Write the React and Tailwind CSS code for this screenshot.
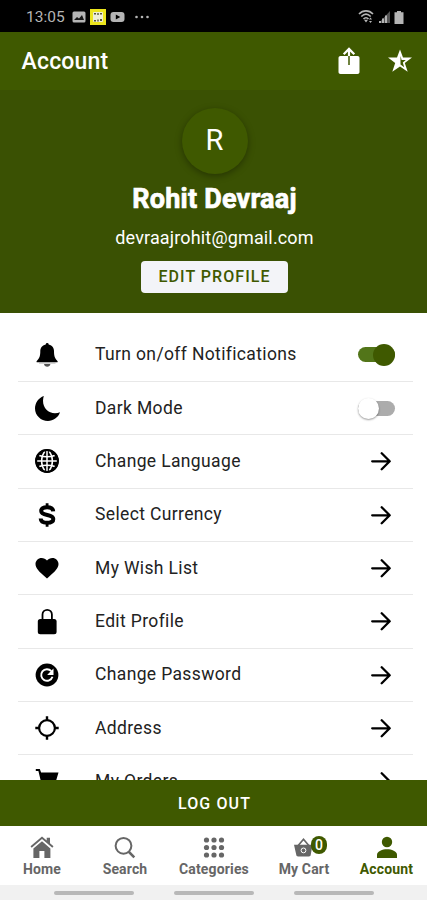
import React from "react";

function Svg({ w = 24, h = 24, box, className = "", children }) {
  return (
    <svg width={w} height={h} viewBox={box || `0 0 ${w} ${h}`} className={`block shrink-0 ${className}`} fill="currentColor">
      {children}
    </svg>
  );
}

const Bell = () => (
  <Svg>
    <path d="M12.200 0a1.500 1.500 0 0 1 1.500 1.400c3.800.9 5.300 3.500 5.300 6.700 0 5 .7 7.200 3.200 9.600.9.9.5 1.600-.3 1.600H2.300c-.8 0-1.200-.7-.3-1.600 2.600-2.400 3.300-4.600 3.300-9.600 0-3.200 1.600-5.800 5.400-6.700A1.500 1.500 0 0 1 12.200 0Z" />
    <path d="M9 21h6.400c-.3 1.700-1.500 2.800-3.200 2.800S9.300 22.700 9 21Z" fill="#555" />
    <path d="M4 19.300h16.500v1.200H4z" fill="#aaa" />
  </Svg>
);

const Moon = () => (
  <Svg w={25} h={25} box="0 0 24 24">
    <path d="M8.500 0A12.600 12.600 0 0 0 7.700 4.600c0 7 5.100 12 11.500 12 1.700 0 3.400-.3 4.800-.9C22.200 20.900 17.600 24 12.400 24 5.700 24 0 18.700 0 12 0 6.500 3.400 1.700 8.500 0Z" />
  </Svg>
);

const Globe = () => (
  <Svg>
    <circle cx="12" cy="12" r="11.700" />
    <g fill="none" stroke="#fff" strokeWidth="1.500">
      <path d="M2 12h20M12 2v20" />
      <path d="M4.300 6.500c4.300 1.800 11.100 1.800 15.400 0M4.300 17.500c4.300-1.800 11.100-1.800 15.400 0" />
      <path d="M9.800 2.400C5.500 8 5.500 16 9.800 21.600M14.200 2.400c4.300 5.600 4.300 13.600 0 19.200" />
    </g>
    <circle cx="12" cy="12" r="10.900" fill="none" stroke="currentColor" strokeWidth="2" />
  </Svg>
);

const Dollar = () => (
  <Svg>
    <path fill="none" stroke="currentColor" strokeWidth="4" d="M18.200 8.300C18 5.500 15.700 4.200 12.100 4.200 8.500 4.200 6.200 5.600 6.200 8c0 5.400 12.100 2.700 12.100 8 0 2.500-2.500 3.800-6.200 3.800-3.800 0-6.300-1.400-6.400-4.300" />
    <path d="M10.700.2h2.800v4h-2.800zM10.700 19.800h2.800v4h-2.800z" />
  </Svg>
);

const Heart = () => (
  <Svg>
    <path d="M12 22.500 10.300 21C4.200 15.600.5 12.300.5 8 .5 4.500 3.200 1.900 6.600 1.900c2.100 0 4.100 1 5.400 2.600 1.300-1.600 3.300-2.600 5.400-2.600 3.400 0 6.100 2.600 6.100 6.100 0 4.300-3.700 7.600-9.800 13Z" />
  </Svg>
);

const Lock = () => (
  <Svg w={24} h={27}>
    <rect x="2.800" y="11" width="18.800" height="15.200" rx="2.500" />
    <path fill="none" stroke="currentColor" strokeWidth="1.800" d="M7.500 12V6.500a4.700 4.700 0 0 1 9.400 0V12" />
  </Svg>
);

const Password = () => (
  <Svg>
    <circle cx="12" cy="12" r="11.400" />
    <path fill="none" stroke="#fff" strokeWidth="1.900" d="M16.300 8.100A5.800 5.800 0 1 0 17.500 13.800" />
    <path fill="#fff" d="M18.500 5.500v6.400h-6.400z" />
  </Svg>
);

const Locate = () => (
  <Svg>
    <circle cx="12" cy="12" r="7.900" fill="none" stroke="currentColor" strokeWidth="2.200" />
    <path d="M10.800.3h2.400v4h-2.400zM10.800 19.700h2.400v4h-2.400zM.3 10.800h4v2.400h-4zM19.700 10.800h4v2.400h-4z" />
  </Svg>
);

const Cart = () => (
  <Svg>
    <path d="M.8 0h4l1.300 3.500h17.400l-2.800 9.500H8.200L7 16h13v2H5.500c-1 0-1.600-1-1.100-1.900L6 12.800 3.400 2H.8z" />
    <circle cx="8" cy="21" r="2" />
    <circle cx="18" cy="21" r="2" />
  </Svg>
);

const Arrow = () => (
  <Svg w={20} h={20} className="mr-[22px]">
    <path fill="none" stroke="currentColor" strokeWidth="2.300" strokeLinecap="round" strokeLinejoin="round" d="M1.200 10.300h17M10.700 2.300l8 8-8 8" />
  </Svg>
);

const Toggle = ({ on }) =>
  on ? (
    <div className="mr-[18px] flex h-[15px] w-[37px] items-center justify-end rounded-full bg-[#527519]">
      <div className="h-[22px] w-[22px] shrink-0 rounded-full bg-[#3f5900]" />
    </div>
  ) : (
    <div className="mr-[18px] flex h-[15px] w-[37px] items-center rounded-full bg-[#acacac]">
      <div className="h-[21px] w-[21px] shrink-0 rounded-full bg-white shadow-[0_1px_2px_rgba(0,0,0,0.4)]" />
    </div>
  );

const rows = [
  ["Turn on/off Notifications", Bell, <Toggle on />],
  ["Dark Mode", Moon, <Toggle />],
  ["Change Language", Globe, <Arrow />],
  ["Select Currency", Dollar, <Arrow />],
  ["My Wish List", Heart, <Arrow />],
  ["Edit Profile", Lock, <Arrow />],
  ["Change Password", Password, <Arrow />],
  ["Address", Locate, <Arrow />],
  ["My Orders", Cart, <Arrow />],
];

const HomeIcon = () => (
  <Svg w={24} h={23}>
    <path d="M12 5.200 3.400 12.500V22h6v-7h5v7h6v-9.500Z" />
    <path d="m12 .6 4.700 4V1.800H20v5.500l3.500 3-1.200 1.400L12 3 1.700 11.700.5 10.300Z" />
  </Svg>
);
const SearchIcon = () => (
  <Svg w={24} h={23}>
    <circle cx="10.500" cy="9.800" r="7.900" fill="none" stroke="currentColor" strokeWidth="2" />
    <path d="m15.500 15.500 5.800 5.800" stroke="currentColor" strokeWidth="2.500" />
  </Svg>
);
const GridIcon = () => (
  <Svg w={24} h={23}>
    {[4.500, 12, 19.500].map((x) => [4, 11.500, 19].map((y) => <circle key={`${x}-${y}`} cx={x} cy={y} r="2.600" />))}
  </Svg>
);
const BasketIcon = () => (
  <div className="relative">
    <Svg w={24} h={23}>
      <path d="M2 8.700h18.500l-1.800 10.400c-.2 1-.8 1.400-1.700 1.400H6c-.9 0-1.500-.4-1.700-1.400Z" />
      <path fill="none" stroke="currentColor" strokeWidth="1.700" d="m6.200 9.500 5.300-6.300 5.300 6.300" />
      <circle cx="11.500" cy="14.400" r="2.400" fill="none" stroke="#fff" strokeWidth="1" />
    </Svg>
    <span className="absolute top-0 left-[19px] flex h-[18px] w-[16px] items-center justify-center rounded-full bg-[#3f5900] text-[14px] leading-none font-medium text-white">0</span>
  </div>
);
const PersonIcon = () => (
  <Svg w={24} h={23}>
    <ellipse cx="12" cy="6" rx="5.200" ry="5.300" />
    <path d="M2 22v-3.200c0-3.600 5.500-5.600 10-5.600s10 2 10 5.600V22Z" />
  </Svg>
);

const tabs = [
  ["Home", HomeIcon, "w-[84px]", ""],
  ["Search", SearchIcon, "w-[82px]", ""],
  ["Categories", GridIcon, "w-[96px]", ""],
  ["My Cart", BasketIcon, "w-[84px]", ""],
  ["Account", PersonIcon, "w-[81px]", "text-[#3f5900]"],
];

export default function App() {
  return (
    <div className="flex h-[900px] w-[427px] flex-col overflow-hidden bg-white font-[Roboto,sans-serif] text-black">
      <div className="flex h-8 shrink-0 items-center bg-black pt-[2px] pl-[26px] text-[#b5b5b5]">
        <span className="w-[45px] pt-[2px] text-[15.500px] leading-none">13:05</span>
        <Svg w={14} h={12} className="ml-[1px]">
          <rect x=".5" y=".5" width="13" height="11" rx="1.500" />
          <path fill="#161616" d="m2 9 3-3 2 1.500L10 4l2 5Z" />
        </Svg>
        <div className="ml-[4px] flex h-4 w-4 items-center justify-center bg-[#ece51d]">
          <Svg w={10} h={10} className="text-[#eeeed7]">
            <rect width="10" height="10" rx="1" />
            <path fill="#55553a" d="M1 1h2v1.500H1zM7 1h2v1.500H7zM4.300 1h1.400v2H4.300zM1 8h2v1.500H1zM7 7h2v2H7zM4.300 7.500h1.400v2H4.300z" />
          </Svg>
        </div>
        <Svg w={15} h={12} className="ml-[4px]">
          <rect x=".5" y="1" width="14" height="10" rx="3" />
          <path d="m5.800 3.500 4.500 2.500-4.500 2.500Z" fill="#000" />
        </Svg>
        <Svg w={14} h={4} className="ml-[10px]">
          <circle cx="1.500" cy="2" r="1.300" />
          <circle cx="7" cy="2" r="1.300" />
          <circle cx="12.500" cy="2" r="1.300" />
        </Svg>
        <Svg w={17} h={15} className="mr-[4px] ml-auto">
          <g fill="none" stroke="currentColor" strokeWidth="1.600">
            <path d="M1 4c4-4.200 10-4.200 14 0M3.300 6.500c3-3 6.400-3 9.400 0M5.500 9c1.500-1.700 3.500-1.700 5 0" />
          </g>
          <path d="m6 9.700 2 2.800 2-2.800ZM11 9.500l1.500-2L14 9.500ZM11 11h3L12.500 13Z" />
        </Svg>
        <Svg w={11} h={12} className="mr-[4px]">
          <path fill="#555" d="M0 12 11 0v12Z" />
          <path d="M0 10h2v2H0zM3 7.500h2V12H3zM6 4.500h2V12H6z" />
        </Svg>
        <Svg w={10} h={13} className="mr-[23px]">
          <path d="M3 0h4v1.300h2.500V13h-9V1.300H3Z" />
        </Svg>
      </div>

      <header className="flex h-[58px] shrink-0 items-center bg-[#3f5900] pl-[21.500px] text-white">
        <h1 className="grow text-[23px] leading-none font-medium tracking-[0.200px]">Account</h1>
        <Svg w={24} h={28} className="mr-[26px]">
          <path d="M3.500 9h17c1.200 0 2 .8 2 2v14c0 1.200-.8 2-2 2h-17c-1.200 0-2-.8-2-2V11c0-1.200.8-2 2-2Z" />
          <path fill="none" stroke="#3f5900" strokeWidth="1.500" d="M12 8v10" />
          <path fill="none" stroke="currentColor" strokeWidth="2.200" d="M12 9V2.400M6.700 7.200 12 1.900l5.300 5.300" />
        </Svg>
        <Svg w={26} h={26} className="mr-[14px]">
          <path d="m13 1.600 3 8h9l-7.200 5.400 2.900 8.800-7.700-5.300-7.700 5.300 2.900-8.800L1 9.600h9Z" />
          <path fill="#3f5900" d="M13.500 8v8.500l3.700 2.700-1.400-4.700 3-2.400h-4.200Z" />
        </Svg>
      </header>

      <section className="flex h-[223px] shrink-0 flex-col items-center bg-[#3a5103] pl-[2px] text-white">
        <div className="mt-[18px] flex h-[66px] w-[66px] items-center justify-center rounded-full bg-[#3f5900] text-[29px] shadow-[0_2px_7px_rgba(0,0,0,0.35)]">R</div>
        <h2 className="mt-[9px] text-[27px] leading-8 font-bold tracking-[0.200px] [-webkit-text-stroke:0.700px_white]">Rohit Devraaj</h2>
        <p className="mt-[11px] text-[18px] leading-6 tracking-[0.150px]">devraajrohit@gmail.com</p>
        <button className="mt-[11px] h-8 w-[147px] rounded-[4px] bg-[#f3f4f8] pb-[1px] text-[16px] leading-none font-medium tracking-[1.050px] text-[#3f5900]">EDIT PROFILE</button>
      </section>

      <main className="h-[467px] shrink-0 overflow-hidden pt-[15.500px] pr-[14px] pl-[18px]">
        {rows.map(([label, Icon, end]) => (
          <div key={label} className="flex h-[53.350px] items-center border-b-[1.500px] border-[#e8e8e8] pl-[17px]">
            <div className="flex w-[60px] shrink-0 items-center">
              <Icon />
            </div>
            <span className="grow pt-[1px] text-[17.500px] leading-none tracking-[0.360px] whitespace-nowrap text-[#222]">{label}</span>
            <div>{end}</div>
          </div>
        ))}
      </main>

      <button className="h-[46px] shrink-0 bg-[#3f5900] pt-[1px] pl-[2px] text-[16px] leading-none font-medium tracking-[1.100px] text-white">LOG OUT</button>

      <nav className="flex h-[59px] shrink-0 justify-center text-[#666]">
        {tabs.map(([label, Icon, width, tone]) => (
          <div key={label} className={`flex shrink-0 flex-col items-center pt-[10px] ${width} ${tone}`}>
            <Icon />
            <span className="mt-[2px] text-[14px] leading-[16px] font-bold tracking-[0.150px] whitespace-nowrap">{label}</span>
          </div>
        ))}
      </nav>

      <div className="flex h-[15px] shrink-0 items-center justify-center gap-10 bg-[#f1f1f1]">
        <i className="h-1 w-20 rounded-full bg-[#b8b8b8]" />
        <i className="h-1 w-20 rounded-full bg-[#b8b8b8]" />
        <i className="h-1 w-20 rounded-full bg-[#b8b8b8]" />
      </div>
    </div>
  );
}
